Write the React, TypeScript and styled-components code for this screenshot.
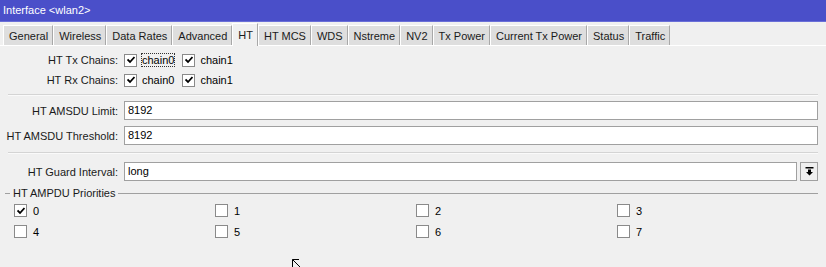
import React from 'react';
import styled, { createGlobalStyle } from 'styled-components';

const GlobalStyle = createGlobalStyle`
  html, body {
    margin: 0;
    padding: 0;
    background: #f0f0f0;
  }
  body {
    font-family: 'Liberation Sans', Arial, sans-serif;
    font-size: 11px;
    color: #000;
  }
`;

const tabs = [
  'General',
  'Wireless',
  'Data Rates',
  'Advanced',
  'HT',
  'HT MCS',
  'WDS',
  'Nstreme',
  'NV2',
  'Tx Power',
  'Current Tx Power',
  'Status',
  'Traffic',
];

const priorities = [
  { value: '0', checked: true },
  { value: '1', checked: false },
  { value: '2', checked: false },
  { value: '3', checked: false },
  { value: '4', checked: false },
  { value: '5', checked: false },
  { value: '6', checked: false },
  { value: '7', checked: false },
];

function CheckMark() {
  return (
    <svg width="8" height="8" viewBox="0 0 8 8">
      <path d="M0.5 3.5 L3 6 L7.5 1" stroke="#000" strokeWidth="1.8" fill="none" />
    </svg>
  );
}

function Check({ checked }: { checked: boolean }) {
  return <Box>{checked && <CheckMark />}</Box>;
}

export default function App(): JSX.Element {
  return (
    <Window>
      <GlobalStyle />
      <TitleBar>Interface &lt;wlan2&gt;</TitleBar>

      <TabStrip>
        {tabs.map((t) => (
          <Tab key={t} active={t === 'HT'}>
            {t}
          </Tab>
        ))}
      </TabStrip>

      <Body>
        <ChainRows>
          <ChainRow>
            <Label>HT Tx Chains:</Label>
            <Check checked />
            <ChainText focused>chain0</ChainText>
            <Check checked />
            <ChainText>chain1</ChainText>
          </ChainRow>
          <ChainRow>
            <Label>HT Rx Chains:</Label>
            <Check checked />
            <ChainText>chain0</ChainText>
            <Check checked />
            <ChainText>chain1</ChainText>
          </ChainRow>
        </ChainRows>

        <Separator />

        <Fields>
          <FieldRow>
            <Label>HT AMSDU Limit:</Label>
            <Input>8192</Input>
          </FieldRow>
          <FieldRow>
            <Label>HT AMSDU Threshold:</Label>
            <Input>8192</Input>
          </FieldRow>
        </Fields>

        <Separator />

        <FieldRow single>
          <Label>HT Guard Interval:</Label>
          <Input>long</Input>
          <DropButton>
            <svg width="9" height="9" viewBox="0 0 9 9">
              <rect x="0.5" y="0" width="8" height="1.5" fill="#000" />
              <path d="M3 2.5 H6 V5 H8 L4.5 8.5 L1 5 H3 Z" fill="#000" />
            </svg>
          </DropButton>
        </FieldRow>

        <Group>
          <GroupTitle>
            <Dash />
            <span>HT AMPDU Priorities</span>
            <GroupLine />
          </GroupTitle>
          <PriorityGrid>
            {priorities.map((p) => (
              <PriorityItem key={p.value}>
                <Check checked={p.checked} />
                <span>{p.value}</span>
              </PriorityItem>
            ))}
          </PriorityGrid>
        </Group>
      </Body>

      <Cursor width="12" height="10" viewBox="0 0 12 10">
        <path d="M0.5 0.5 L0.5 9 M0.5 0.5 L7 0.5 M0.5 0.5 L8 8" stroke="#000" strokeWidth="1" fill="none" />
      </Cursor>
    </Window>
  );
}

const Window = styled.div`
  position: relative;
  width: 826px;
  height: 267px;
  overflow: hidden;
  background: #f0f0f0;
`;

const TitleBar = styled.div`
  height: 21px;
  line-height: 21px;
  padding-left: 3px;
  background: #4a4fc9;
  border-bottom: 1px solid #6a6fd8;
  color: #fff;
`;

const TabStrip = styled.div`
  display: flex;
  align-items: flex-end;
  height: 23px;
  padding: 0 0 0 3px;
  border-bottom: 1px solid #fff;
`;

const Tab = styled.div<{ active?: boolean }>`
  display: flex;
  align-items: center;
  padding: 0 4px 0 5px;
  height: ${({ active }) => (active ? '22px' : '19px')};
  margin-bottom: ${({ active }) => (active ? '-1px' : '0')};
  background: ${({ active }) => (active ? '#f0f0f0' : '#dedede')};
  border-top: 1px solid #fff;
  border-left: 1px solid #fff;
  border-right: 1px solid #a8a8a8;
  color: #1a1a1a;
  white-space: nowrap;
`;

const Body = styled.div`
  display: flex;
  flex-direction: column;
  padding: 7px 8px 0 3px;
`;

const ChainRows = styled.div`
  display: flex;
  flex-direction: column;
  gap: 6px;
`;

const ChainRow = styled.div`
  display: flex;
  align-items: center;
  height: 14px;
`;

const Label = styled.div`
  flex: 0 0 115px;
  text-align: right;
  padding-right: 6px;
  white-space: nowrap;
  color: #1a1a1a;
`;

const Box = styled.div`
  width: 11px;
  height: 11px;
  flex: 0 0 11px;
  border: 1px solid #8a8a8a;
  background: #fff;
  display: flex;
  align-items: center;
  justify-content: center;
`;

const ChainText = styled.span<{ focused?: boolean }>`
  margin: 0 7px 0 4px;
  padding: 0 1px;
  outline: ${({ focused }) => (focused ? '1px dotted #333' : 'none')};
  outline-offset: -1px;
  line-height: 14px;
`;

const Separator = styled.div`
  height: 1px;
  margin: 7px 0 5px 5px;
  background: #d4d4d4;
  border-bottom: 1px solid #fafafa;
`;

const Fields = styled.div`
  display: flex;
  flex-direction: column;
  gap: 6px;
`;

const FieldRow = styled.div<{ single?: boolean }>`
  display: flex;
  align-items: center;
  height: 19px;
  margin-top: ${({ single }) => (single ? '3px' : '0')};
`;

const Input = styled.div`
  flex: 1;
  height: 17px;
  line-height: 17px;
  padding-left: 3px;
  background: #fff;
  border: 1px solid #a0a0a0;
`;

const DropButton = styled.div`
  width: 16px;
  height: 17px;
  margin-left: 3px;
  border: 1px solid #a0a0a0;
  background: #f0f0f0;
  display: flex;
  align-items: center;
  justify-content: center;
`;

const Group = styled.div`
  display: flex;
  flex-direction: column;
  margin-top: 5px;
`;

const GroupTitle = styled.div`
  display: flex;
  align-items: center;
  gap: 3px;
  height: 14px;
  color: #1a1a1a;
`;

const Dash = styled.div`
  width: 5px;
  height: 1px;
  margin-left: 2px;
  background: #a0a0a0;
`;

const GroupLine = styled.div`
  flex: 1;
  height: 1px;
  background: #a0a0a0;
`;

const PriorityGrid = styled.div`
  display: grid;
  grid-template-columns: repeat(4, 201px);
  row-gap: 8px;
  padding: 4px 0 0 11px;
`;

const PriorityItem = styled.div`
  display: flex;
  align-items: center;
  gap: 6px;
  height: 13px;
`;

const Cursor = styled.svg`
  position: absolute;
  left: 292px;
  top: 259px;
`;
